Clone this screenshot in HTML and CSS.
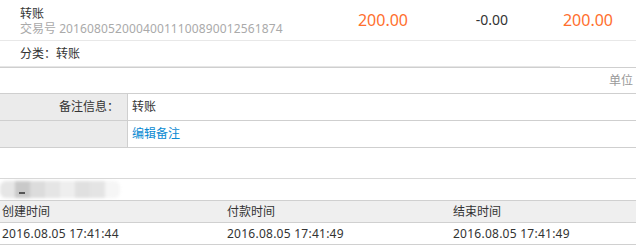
FILE: index.html
```html
<!DOCTYPE html>
<html lang="zh-CN">
<head>
<meta charset="utf-8">
<title>交易详情</title>
<link rel="stylesheet" href="styles.css">
</head>
<body>
<div class="page">
  <div class="summary">
    <div class="info">
      <div class="title">转账</div>
      <div class="trade-no">交易号 <span class="trade-num">20160805200040011100890012561874</span></div>
    </div>
    <div class="amt amt-1 orange">200.00</div>
    <div class="amt amt-2">-0.00</div>
    <div class="amt amt-3 orange">200.00</div>
  </div>
  <div class="category">分类：转账</div>
  <div class="unit">单位</div>
  <div class="remark">
    <div class="remark-row">
      <div class="remark-label">备注信息：</div>
      <div class="remark-value">转账</div>
    </div>
    <div class="remark-row">
      <div class="remark-label"></div>
      <div class="remark-value"><a class="edit-link" href="#">编辑备注</a></div>
    </div>
  </div>
  <div class="spacer"></div>
  <div class="blurred">
    <div class="blur-strip">
      <span class="b b1"></span><span class="b b2"></span><span class="b b3"></span><span class="b b4"></span><span class="b b5"></span><span class="b b6"></span><span class="b b7"></span><span class="b b8"></span>
    </div>
    <span class="blur-mark"></span>
  </div>
  <div class="times">
    <div class="times-row times-head">
      <div class="cell">创建时间</div>
      <div class="cell">付款时间</div>
      <div class="cell">结束时间</div>
    </div>
    <div class="times-row times-data">
      <div class="cell">2016.08.05 17:41:44</div>
      <div class="cell">2016.08.05 17:41:49</div>
      <div class="cell">2016.08.05 17:41:49</div>
    </div>
  </div>
</div>
</body>
</html>
```
FILE: styles.css
```css
* { box-sizing: border-box; }
html, body { margin: 0; padding: 0; background: #fff; }
body {
  font-family: "Noto Sans", "Noto Sans CJK SC", sans-serif;
  font-size: 12px;
  color: #333;
}
.page { width: 636px; }

.summary {
  display: flex;
  height: 41px;
  border-bottom: 1px solid #e8e8e8;
  padding-right: 23px;
}
.info {
  flex: 1;
  padding: 6px 0 0 20px;
  line-height: 15px;
}
.title { color: #333; }
.trade-no { color: #aaa; }
.trade-num { letter-spacing: 0.12px; }
.amt {
  line-height: 40px;
  text-align: right;
}
.amt-1 { width: 120px; font-size: 16px; }
.amt-2 { width: 100px; font-size: 14px; color: #333; }
.amt-3 { width: 105px; font-size: 16px; }
.orange { color: #ff6f2e; }

.category {
  width: 560px;
  height: 26px;
  line-height: 25px;
  padding-left: 20px;
  border-bottom: 1px solid #e6e6e6;
}

.unit {
  height: 27px;
  line-height: 25px;
  border-top: 1px solid #cfcfcf;
  border-bottom: 1px solid #cfcfcf;
  text-align: right;
  padding-right: 3px;
  color: #999;
}

.remark-row {
  display: grid;
  grid-template-columns: 128px 1fr;
  height: 27px;
  border-bottom: 1px solid #cfcfcf;
}
.remark-label {
  background: #ebebeb;
  border-right: 1px solid #cfcfcf;
  text-align: right;
  padding-right: 8px;
  line-height: 26px;
}
.remark-value {
  padding-left: 4px;
  line-height: 26px;
}
.edit-link {
  color: #0a8ad2;
  text-decoration: none;
}

.spacer { height: 30px; }

.blurred {
  position: relative;
  height: 22px;
  border-top: 1px solid #d8d8d8;
  overflow: hidden;
}
.blur-strip {
  display: flex;
  height: 17px;
  margin-top: 2px;
  filter: blur(1.5px);
}
.b { width: 15px; height: 17px; }
.b1 { background: #e6e6e6; border-radius: 6px 0 0 6px; }
.b2 { background: #c9c9c9; }
.b3 { background: #dcdcdc; }
.b4 { background: #e5e5e5; }
.b5 { background: #eeeeee; }
.b6 { background: #e0e0e0; }
.b7 { background: #e4e4e4; }
.b8 { background: #f6f6f6; border-radius: 0 6px 6px 0; }
.blur-mark {
  position: absolute;
  left: 19px;
  top: 13px;
  width: 6px;
  height: 2px;
  background: #555;
  filter: blur(0.4px);
}

.times-row {
  display: grid;
  grid-template-columns: 225px 226px 1fr;
  height: 22px;
  line-height: 21px;
  border-bottom: 1px solid #d0d0d0;
}
.times-head {
  background: #efefef;
  border-top: 1px solid #d0d0d0;
  height: 23px;
}
.times-row .cell { padding-left: 2px; }
.times-data .cell { letter-spacing: 0.25px; }
```
